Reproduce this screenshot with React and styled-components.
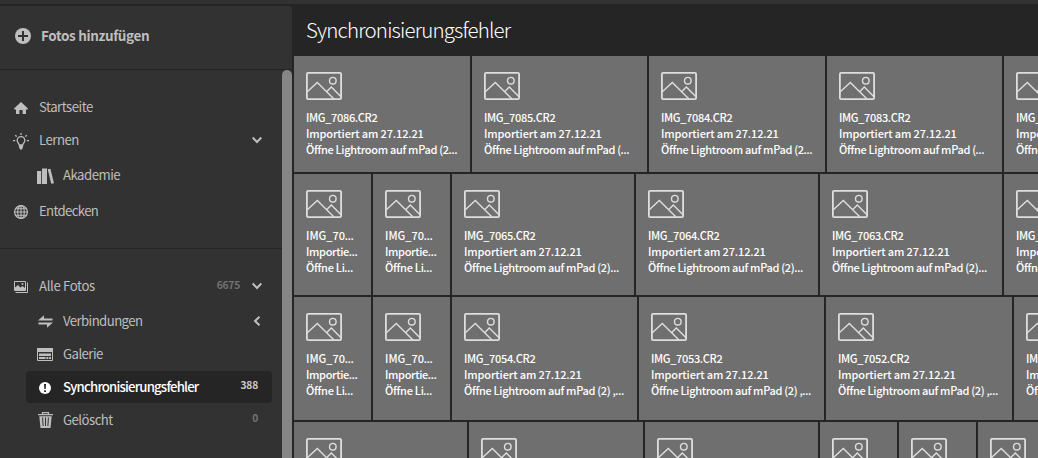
import React from 'react'
import styled, { createGlobalStyle } from 'styled-components'


const GlobalStyle = createGlobalStyle`
    * {
        box-sizing: border-box;
    }
    body {
        margin: 0;
        overflow: hidden;
        background: #252525;
        font-family: "Noto Sans CJK JP", "Noto Sans", sans-serif;
    }
    svg {
        display: block;
        flex: none;
    }
`;
const Window = styled.div`
    height: 458px;
    width: 1038px;
    overflow: hidden;
    display: flex;
    flex-direction: column;
    gap: 2px;
    background: #252525;
`;
const TopStrip = styled.div`
    height: 4px;
    flex: none;
    background: #323232;
`;
const Body = styled.div`
    display: flex;
    gap: 2px;
    height: 452px;
`;
const Sidebar = styled.aside`
    width: 292px;
    flex: none;
    border-top-right-radius: 3px;
    overflow: hidden;
    background: #323232;
    color: #bebebe;
`;
const AddPhotos = styled.div`
    height: 64px;
    padding: 0 0 3px 11px;
    border-bottom: 1px solid #252525;
    display: flex;
    align-items: center;
    gap: 6px;
    font-size: 13.5px;
    line-height: 20px;
    font-weight: 700;
    letter-spacing: -0.35px;
    white-space: nowrap;
`;
const AddLabel = styled.span`
    padding-bottom: 2px;
`;
const SidebarScroll = styled.div`
    display: flex;
    height: 388px;
`;
const ScrollThumb = styled.div`
    width: 10px;
    border-radius: 5px 5px 0 0;
    background: #868686;
`;
const Nav = styled.nav`
    flex: 1;
`;
const NavGroup = styled.div`
    padding: ${props => props.$padding};
    border-bottom: ${props => props.$line ? '1px solid #252525' : 'none'};
`;
const NavItem = styled.div`
    height: ${props => props.$height}px;
    margin: 0 10px 0 ${props => props.$nested ? 26 : 2}px;
    padding: 0 ${props => props.$chevron ? 10 : 14}px 0 7px;
    border-radius: 4px;
    display: flex;
    align-items: center;
    background: ${props => props.$active ? '#252525' : 'transparent'};
    color: ${props => props.$active ? '#ffffff' : '#bebebe'};
`;
const IconSlot = styled.span`
    width: 24px;
    height: 24px;
    padding-top: ${props => props.$drop || 0}px;
    flex: none;
    display: flex;
    align-items: center;
    justify-content: center;
`;
const NavLabel = styled.span`
    flex: 1;
    padding: 0 0 1px 6px;
    font-size: 13.2px;
    line-height: 20px;
    font-weight: ${props => props.$active ? 500 : 400};
    letter-spacing: ${props => props.$spacing || 0}px;
    white-space: nowrap;
`;
const Count = styled.span`
    padding-bottom: 4px;
    font-size: 10.2px;
    line-height: 14px;
    font-weight: 700;
    letter-spacing: -0.2px;
    color: ${props => props.$active ? '#cccccc' : '#737373'};
`;
const Chevron = styled.svg`
    margin-left: 12px;
    transform: ${props => props.$left ? 'rotate(90deg) translateY(1px)' : 'none'};
`;
const Main = styled.main`
    flex: 1;
    min-width: 0;
    overflow: hidden;
`;
const Title = styled.h1`
    height: 50px;
    margin: 0;
    padding-left: 12px;
    font-size: 20.5px;
    line-height: 46px;
    font-weight: 300;
    letter-spacing: -0.83px;
    color: #ffffff;
`;
const Grid = styled.div`
    display: flex;
    flex-direction: column;
    gap: 2px;
`;
const GridRow = styled.div`
    height: ${props => props.$height}px;
    display: flex;
    gap: 2px;
`;
const Tile = styled.div`
    width: ${props => props.$width}px;
    flex: none;
    overflow: hidden;
    padding: 16px 0 0 12px;
    background: #6f6f6f;
    color: #ffffff;
`;
const TileText = styled.div`
    margin-top: 9px;
    font-size: 11px;
    line-height: 16px;
    font-weight: 500;
    white-space: nowrap;
`;
const TileLine = styled.div`
    height: 16px;
    letter-spacing: ${props => props.$spacing || 0}px;
`;
const Dots = styled.span`
    font-family: Lato, sans-serif;
    font-weight: 700;
`;


const PlusIcon = () => (
    <svg width='16' height='16' viewBox='0 0 16 16'>
        <circle cx='8' cy='8' r='8' fill='currentColor' />
        <path d='M8 3v10M3 8h10' stroke='#323232' strokeWidth='2' />
    </svg>
)
const HomeIcon = () => (
    <svg width='14' height='12' viewBox='0 0 14 12'>
        <path d='M7 0l7 6.600-.5.9H12V12H8.600V8H5.400v4H2V7.500H.5L0 6.600z' fill='currentColor' />
    </svg>
)
const BulbIcon = () => (
    <svg width='16' height='17' viewBox='0 0 16 17' fill='none' stroke='currentColor'>
        <path d='M6.200 12c0-1.700-2-2.300-2-4.500a3.800 3.800 0 017.600 0c0 2.200-2 2.800-2 4.500z' strokeWidth='1.300' />
        <path d='M6 12.200h4V14L9 16.500H7L6 14z' fill='currentColor' stroke='none' />
        <path d='M8 0v2M2.200 2.200l1.500 1.400M13.800 2.200l-1.500 1.400M0 7.700h2.200M13.800 7.700H16' strokeWidth='1.300' />
    </svg>
)
const BooksIcon = () => (
    <svg width='17' height='16' viewBox='0 0 17 16' fill='currentColor'>
        <path d='M0 3h4.200v13H0zM5 .6h5V16H5zM10.700 1.300l2.700-.6L17 15.200l-2.800.6z' />
    </svg>
)
const GlobeIcon = () => (
    <svg width='14' height='14' viewBox='0 0 14 14' fill='none' stroke='currentColor' strokeWidth='1.100'>
        <circle cx='7' cy='7' r='6.400' strokeWidth='1.200' />
        <ellipse cx='7' cy='7' rx='3.300' ry='6.400' />
        <path d='M7 .5v13M.5 7h13M1.500 3.700h11M1.500 10.300h11' />
    </svg>
)
const PhotosIcon = () => (
    <svg width='14' height='12' viewBox='0 0 14 12'>
        <path d='M.5.5h11v9H.5z' fill='none' stroke='currentColor' />
        <path d='M1 8V6.500L4 4l2.500 2.400L8.500 5 11 7v2.500H1z' fill='currentColor' />
        <circle cx='8.500' cy='3' r='1' fill='currentColor' />
        <path d='M13.500 1.500v10H1.500' fill='none' stroke='currentColor' />
    </svg>
)
const ConnectIcon = () => (
    <svg width='15' height='13' viewBox='0 0 15 13' fill='currentColor'>
        <path d='M0 5.500L6 .2V3.400h8.500v2.100zM15 7.500l-6 5.300V9.600H.5V7.500z' />
    </svg>
)
const GalleryIcon = () => (
    <svg width='16' height='13' viewBox='0 0 16 13'>
        <path d='M.5.5h15v12H.5z' fill='none' stroke='currentColor' />
        <path d='M0 0h16v4H0zM2 5.500h12V8H2zM2 9h6.500v2H2zM9.300 9h2v2h-2zM12 9h2v2h-2z' fill='currentColor' />
    </svg>
)
const ErrorIcon = () => (
    <svg width='12' height='12' viewBox='0 0 12 12'>
        <circle cx='6' cy='6' r='6' fill='currentColor' />
        <path d='M5 2h2l-.3 5H5.300zM5.100 8.200h1.800V10H5.100z' fill='#252525' />
    </svg>
)
const TrashIcon = () => (
    <svg width='15' height='16' viewBox='0 0 15 16'>
        <path d='M4.500 2V.6h6V2' fill='none' stroke='currentColor' strokeWidth='1.200' />
        <path d='M0 2h15v1.300H0zM1.300 4.200h12.400L12.500 16h-10z' fill='currentColor' />
        <path d='M4.600 5.500l.5 8.500M7.500 5.500V14M10.400 5.500l-.5 8.500' stroke='#323232' strokeWidth='1' />
    </svg>
)
const ImageIcon = () => (
    <svg width='36' height='28' viewBox='0 0 36 28' fill='none' stroke='#dedede'>
        <rect x='.9' y='.9' width='34.200' height='26.200' rx='1.200' strokeWidth='1.800' />
        <circle cx='26.800' cy='8.700' r='3.300' strokeWidth='1.400' />
        <path d='M1 20L11.300 10.500 28 27M20.800 19.500L25.300 15 35 24.700' strokeWidth='1.400' />
    </svg>
)


const navGroups = [
    {
        padding: '21px 0 19px', line: true,
        items: [
            { label: 'Startseite', icon: HomeIcon, height: 33, spacing: -0.5, drop: 1 },
            { label: 'Lernen', icon: BulbIcon, height: 33, spacing: -0.48, chevron: 'down', drop: 1 },
            { label: 'Akademie', icon: BooksIcon, height: 36, spacing: -0.52, nested: true, drop: 2 },
            { label: 'Entdecken', icon: GlobeIcon, height: 36, spacing: -0.66, drop: 2 },
        ],
    },
    {
        padding: '20px 0 0',
        items: [
            { label: 'Alle Fotos', icon: PhotosIcon, height: 35, spacing: -0.36, count: '6675', chevron: 'down', drop: 1 },
            { label: 'Verbindungen', icon: ConnectIcon, height: 34, spacing: -0.58, nested: true, chevron: 'left', drop: 1 },
            { label: 'Galerie', icon: GalleryIcon, height: 33, spacing: -0.55, nested: true },
            { label: 'Synchronisierungsfehler', icon: ErrorIcon, height: 32, spacing: -0.81, nested: true, count: '388', active: true, drop: 2 },
            { label: 'Gelöscht', icon: TrashIcon, height: 34, spacing: -0.53, nested: true, count: '0' },
        ],
    },
]

// [width, file name, third line]
const FULL = 'Öffne Lightroom auf mPad (2)'
const rows = [
    {
        height: 116,
        tiles: [
            [176, 'IMG_7086.CR2', 'Öffne Lightroom auf mPad (2'],
            [175, 'IMG_7085.CR2', 'Öffne Lightroom auf mPad ('],
            [176, 'IMG_7084.CR2', 'Öffne Lightroom auf mPad (2'],
            [175, 'IMG_7083.CR2', 'Öffne Lightroom auf mPad ('],
            [176, 'IMG_7082.CR2', FULL],
        ],
    },
    {
        height: 121,
        tiles: [
            [77, 'IMG_70', 'Öffne Li'],
            [77, 'IMG_70', 'Öffne Li'],
            [182, 'IMG_7065.CR2', FULL],
            [182, 'IMG_7064.CR2', FULL],
            [182, 'IMG_7063.CR2', FULL],
            [182, 'IMG_7062.CR2', FULL],
        ],
    },
    {
        height: 123,
        tiles: [
            [77, 'IMG_70', 'Öffne Li'],
            [77, 'IMG_70', 'Öffne Li'],
            [185, 'IMG_7054.CR2', FULL + ' ,'],
            [185, 'IMG_7053.CR2', FULL + ' ,'],
            [186, 'IMG_7052.CR2', FULL + ' ,'],
            [186, 'IMG_7051.CR2', FULL + ' ,'],
        ],
    },
    {
        height: 120,
        tiles: [[173], [174], [173], [77], [77], [77]],
    },
]


function NavEntry({ item }) {
    const { label, icon: Icon, height, spacing, drop, nested, count, chevron, active } = item
    return (
        <NavItem $height={height} $nested={nested} $active={active} $chevron={chevron}>
            <IconSlot $drop={drop}><Icon /></IconSlot>
            <NavLabel $active={active} $spacing={spacing}>{label}</NavLabel>
            {count && <Count $active={active}>{count}</Count>}
            {chevron && (
                <Chevron $left={chevron === 'left'} width='10' height='10' viewBox='0 0 10 10'>
                    <path d='M.7 1.500L5 6 9.300 1.500' fill='none' stroke='#bebebe' strokeWidth='2' />
                </Chevron>
            )}
        </NavItem>
    )
}

function PhotoTile({ tile }) {
    const [width, name, hint] = tile
    const narrow = width < 100
    return (
        <Tile $width={width}>
            <ImageIcon />
            {name && <TileText>
                <TileLine $spacing={narrow ? 0 : -0.33}>{name}{narrow && <Dots>…</Dots>}</TileLine>
                <TileLine $spacing={narrow ? -0.34 : -0.12}>{narrow ? 'Importie' : 'Importiert am 27.12.21'}{narrow && <Dots>…</Dots>}</TileLine>
                <TileLine $spacing={narrow ? -0.28 : -0.32}>{hint}<Dots>…</Dots></TileLine>
            </TileText>}
        </Tile>
    )
}

function App() {
    return (
        <Window>
            <GlobalStyle />
            <TopStrip />
            <Body>
                <Sidebar>
                    <AddPhotos>
                        <IconSlot><PlusIcon /></IconSlot>
                        <AddLabel>Fotos hinzufügen</AddLabel>
                    </AddPhotos>
                    <SidebarScroll>
                        <Nav>
                            {navGroups.map((group, key) => (
                                <NavGroup key={key} $padding={group.padding} $line={group.line}>
                                    {group.items.map(item => <NavEntry key={item.label} item={item} />)}
                                </NavGroup>
                            ))}
                        </Nav>
                        <ScrollThumb />
                    </SidebarScroll>
                </Sidebar>
                <Main>
                    <Title>Synchronisierungsfehler</Title>
                    <Grid>
                        {rows.map((row, key) => (
                            <GridRow key={key} $height={row.height}>
                                {row.tiles.map((tile, i) => <PhotoTile key={i} tile={tile} />)}
                            </GridRow>
                        ))}
                    </Grid>
                </Main>
            </Body>
        </Window>
    )
}

export default App
